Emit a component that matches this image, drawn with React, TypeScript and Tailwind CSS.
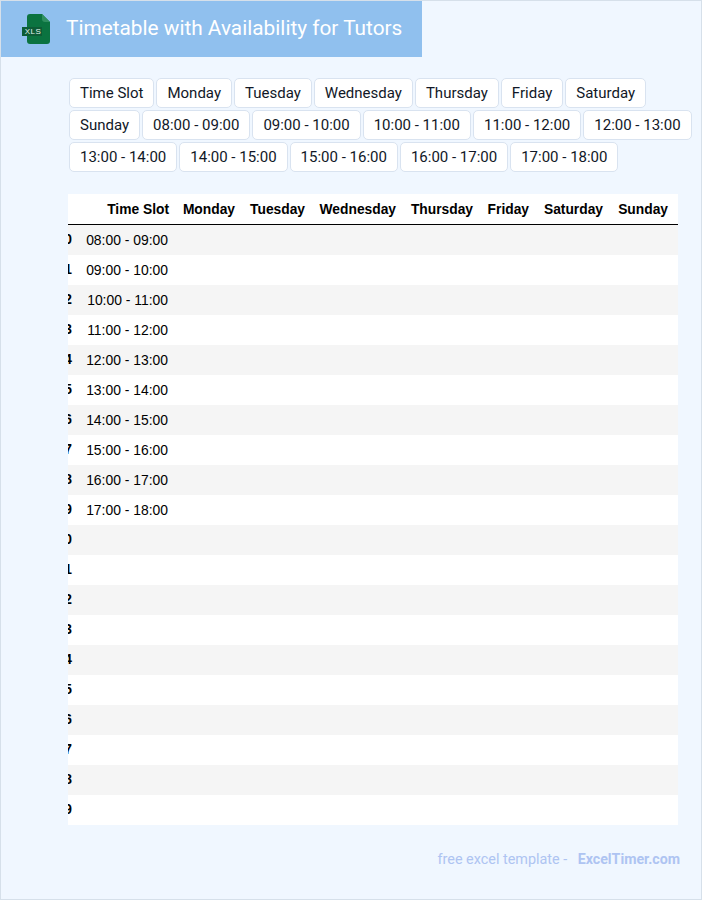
const columns = ["Time Slot", "Monday", "Tuesday", "Wednesday", "Thursday", "Friday", "Saturday", "Sunday"]
const slots = [
  "08:00 - 09:00",
  "09:00 - 10:00",
  "10:00 - 11:00",
  "11:00 - 12:00",
  "12:00 - 13:00",
  "13:00 - 14:00",
  "14:00 - 15:00",
  "15:00 - 16:00",
  "16:00 - 17:00",
  "17:00 - 18:00",
]
const rows = Array.from({ length: 20 }, (_, i) => slots[i] ?? "")
const days = columns.slice(1)

function XlsIcon() {
  return (
    <svg width="30" height="32" viewBox="0 0 30 32" className="shrink-0">
      <path d="M5 4A3 3 0 0 1 8 1h12l8 8v19a3 3 0 0 1-3 3H8a3 3 0 0 1-3-3z" fill="#0b7340" />
      <path d="M20 1l8 8h-5a3 3 0 0 1-3-3z" fill="#2f8f5f" />
      <rect x="0" y="14" width="20" height="9" fill="#0d5c36" />
      <text x="11" y="21.2" textAnchor="middle" fill="#e6f2ec" fontSize="8" fontFamily="'Liberation Sans', sans-serif" letterSpacing="0.4">XLS</text>
    </svg>
  )
}

export default function App() {
  return (
    <div className="relative h-[900px] w-[702px] overflow-hidden border border-[#d6e0ea] bg-[#f0f7ff] font-['Roboto',sans-serif]">
      <div className="flex h-[56px] w-[421px] items-center bg-[#90c0ee] pl-[21px]">
        <XlsIcon />
        <h1 className="ml-[14px] text-[20.8px] font-normal whitespace-nowrap text-white">Timetable with Availability for Tutors</h1>
      </div>

      <div className="mt-[21px] ml-[68px] flex w-[625px] flex-wrap gap-[2px]">
        {[...columns, ...slots].map((label) => (
          <button
            key={label}
            className="h-[30px] rounded-[5px] border border-[#d9e3f0] bg-white px-[10px] text-[15px] leading-none whitespace-nowrap text-[#111827]"
          >
            {label}
          </button>
        ))}
      </div>

      <div className="mt-[22px] ml-[67px] w-[610px] overflow-hidden bg-white font-['Liberation_Sans',sans-serif] text-[13.8px] text-black">
        <table className="ml-[-18px] w-[628px] table-fixed border-separate border-spacing-0">
          <colgroup>
            <col className="w-[32px]" />
            <col className="w-[97px]" />
            <col className="w-[66px]" />
            <col className="w-[70px]" />
            <col className="w-[91px]" />
            <col className="w-[77px]" />
            <col className="w-[56px]" />
            <col className="w-[74px]" />
            <col className="w-[65px]" />
          </colgroup>
          <thead>
            <tr className="h-[31px]">
              <th className="border-b border-black"></th>
              {columns.map((c) => (
                <th key={c} className="border-b border-black pt-[2px] pr-[10px] text-right font-bold whitespace-nowrap">{c}</th>
              ))}
            </tr>
          </thead>
          <tbody>
            {rows.map((slot, i) => (
              <tr key={i} className={i % 2 === 0 ? "h-[30px] bg-[#f5f5f5]" : "h-[30px] bg-white"}>
                <th className="pr-[10px] text-right font-bold">{i}</th>
                <td className="pr-[11px] text-right text-[13.9px] whitespace-nowrap">{slot}</td>
                {days.map((d) => (
                  <td key={d}></td>
                ))}
              </tr>
            ))}
          </tbody>
        </table>
      </div>

      <div className="mt-[24px] flex items-baseline justify-end pr-[21px] whitespace-nowrap text-[#aec4f2]">
        <span className="text-[14.4px]">free excel template -</span>
        <a className="ml-[10.5px] text-[14.2px] font-bold">ExcelTimer.com</a>
      </div>
    </div>
  )
}
